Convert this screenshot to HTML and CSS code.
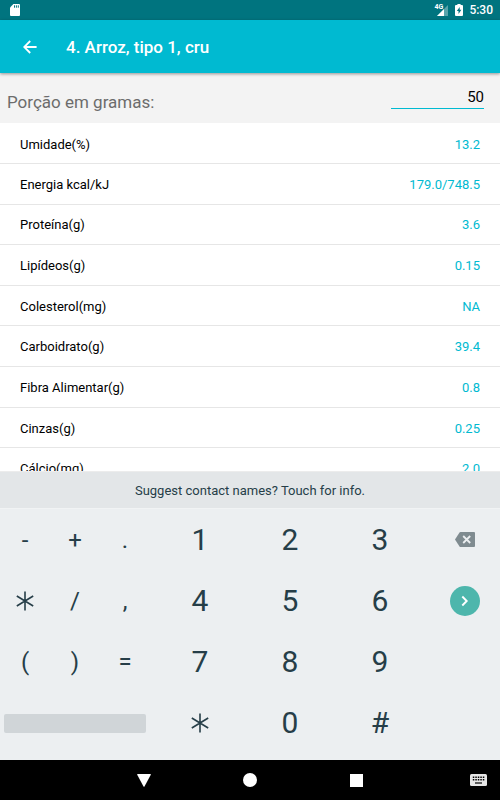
FILE: index.html
```html
<!DOCTYPE html>
<html lang="pt-BR">
<head>
<meta charset="utf-8">
<meta name="viewport" content="width=device-width, initial-scale=1">
<title>4. Arroz, tipo 1, cru</title>
<link rel="stylesheet" href="styles.css">
</head>
<body>
<div class="status">
  <svg class="sd" width="10" height="12" viewBox="0 0 10 12" aria-hidden="true"><path fill="#fff" d="M3.4 0H9q1 0 1 1v10q0 1-1 1H1q-1 0-1-1V3.4z"/><path stroke="#00747f" d="M4.5 1.3v2.4M6.4 1.3v2.4M8.3 1.3v2.4"/></svg>
  <span class="network">4G</span>
  <svg class="signal" width="11" height="11" viewBox="0 0 11 11" aria-hidden="true"><path fill="#fff" fill-opacity=".35" d="M11 0v11H0z"/><path fill="#fff" d="M7 4v7H0z"/></svg>
  <svg class="battery" width="8" height="12" viewBox="0 0 8 12" aria-hidden="true"><path fill="#fff" d="M2.4 0h3.2v1H7q1 0 1 1v9q0 1-1 1H1q-1 0-1-1V2q0-1 1-1h1.400z"/><path fill="#00747f" d="M4.700 3 1.800 7h1.700v3l2.900-4.200H4.700z"/></svg>
  <span class="clock">5:30</span>
</div>
<header class="appbar">
  <button class="back" type="button" aria-label="Voltar"><svg width="14" height="14" viewBox="0 0 14 14"><path fill="none" stroke="#fff" stroke-width="1.800" d="M13.600 7H1.500M7.200 1 1.200 7l6 6"/></svg></button>
  <h1>4. Arroz, tipo 1, cru</h1>
</header>
<main>
  <div class="portion">
    <label for="grams">Porção em gramas:</label>
    <input id="grams" type="text" inputmode="numeric" value="50">
  </div>
  <div class="list">
    <table>
      <tbody>
        <tr><th scope="row">Umidade(%)</th><td>13.2</td></tr>
        <tr><th scope="row">Energia kcal/kJ</th><td>179.0/748.5</td></tr>
        <tr><th scope="row">Proteína(g)</th><td>3.6</td></tr>
        <tr><th scope="row">Lipídeos(g)</th><td>0.15</td></tr>
        <tr><th scope="row">Colesterol(mg)</th><td>NA</td></tr>
        <tr><th scope="row">Carboidrato(g)</th><td>39.4</td></tr>
        <tr><th scope="row">Fibra Alimentar(g)</th><td>0.8</td></tr>
        <tr><th scope="row">Cinzas(g)</th><td>0.25</td></tr>
        <tr><th scope="row">Cálcio(mg)</th><td>2.0</td></tr>
      </tbody>
    </table>
  </div>
</main>
<section class="keyboard">
  <button class="suggest" type="button">Suggest contact names? Touch for info.</button>
  <div class="keys">
    <button class="sym" type="button">-</button>
    <button class="sym" type="button">+</button>
    <button class="sym" type="button">.</button>
    <button class="d1" type="button">1</button>
    <button type="button">2</button>
    <button type="button">3</button>
    <button class="end" type="button" aria-label="Delete"><svg width="20" height="16" viewBox="0 0 20 16"><path fill="#7f8b90" d="M5.500 0H19q1 0 1 1v13q0 1-1 1H5.500q-.6 0-1-.6L0 7.500 4.500.6q.4-.6 1-.6z"/><path stroke="#eceff1" stroke-width="1.800" d="m8.200 4 7 7m0-7-7 7"/></svg></button>

    <button class="sym" type="button" aria-label="*"><svg width="18" height="20" viewBox="0 0 18 20"><path class="star" d="M9 .5v19M.8 5l16.400 10M17.200 5 .8 15"/></svg></button>
    <button class="sym" type="button">/</button>
    <button class="sym" type="button">,</button>
    <button class="d1" type="button">4</button>
    <button type="button">5</button>
    <button type="button">6</button>
    <button class="end" type="button" aria-label="Next"><svg width="30" height="30" viewBox="0 0 30 30"><circle cx="15" cy="15" r="15" fill="#4db6ac"/><path fill="none" stroke="#fff" stroke-width="1.900" d="m12.300 10.500 4.400 4.500-4.400 4.500"/></svg></button>

    <button class="sym" type="button">(</button>
    <button class="sym" type="button">)</button>
    <button class="sym" type="button">=</button>
    <button class="d1" type="button">7</button>
    <button type="button">8</button>
    <button type="button">9</button>

    <button class="space" type="button" aria-label="Space"><span></span></button>
    <button class="d1" type="button" aria-label="*"><svg width="18" height="20" viewBox="0 0 18 20"><path class="star" d="M9 .5v19M.8 5l16.400 10M17.200 5 .8 15"/></svg></button>
    <button type="button">0</button>
    <button type="button">#</button>
  </div>
</section>
<nav class="navbar">
  <button class="nav-back" type="button" aria-label="Back"><svg width="14" height="13" viewBox="0 0 14 13"><path fill="#fff" d="M.7 0h12.600q.9 0 .5.800L7.600 12.200q-.6 1-1.200 0L.2.800Q-.2 0 .7 0z"/></svg></button>
  <button class="nav-home" type="button" aria-label="Home"><svg width="14" height="14" viewBox="0 0 14 14"><circle cx="7" cy="7" r="7" fill="#fff"/></svg></button>
  <button class="nav-recent" type="button" aria-label="Overview"><svg width="13" height="13" viewBox="0 0 13 13"><path fill="#fff" d="M0 0h13v13H0z"/></svg></button>
  <button class="nav-kb" type="button" aria-label="Keyboard"><svg width="17" height="12" viewBox="0 0 17 12"><rect width="17" height="12" rx="1.500" fill="#e6e6e6"/><path stroke="#000" stroke-width="1.500" stroke-dasharray="1.500 1" d="M2.800 3.200h11.500M2.800 5.700h11.500"/><path stroke="#000" stroke-width="1.200" d="M5 9h7"/></svg></button>
</nav>
</body>
</html>
```
FILE: styles.css
```css
* { box-sizing: border-box; }

body {
  margin: 0;
  height: 100vh;
  display: flex;
  flex-direction: column;
  overflow: hidden;
  background: #fff;
  color: #000;
  font-family: Roboto, "Liberation Sans", sans-serif;
}

button {
  border: 0;
  padding: 0;
  background: none;
  color: #263e48;
  font: inherit;
}

svg { display: block; }

.status {
  flex: none;
  display: flex;
  align-items: center;
  height: 20px;
  padding: 0 7px 0 10px;
  background: #00747f;
  color: #fff;
}

.network {
  align-self: flex-start;
  margin-left: auto;
  padding-top: 3px;
  font-size: 7px;
  line-height: 8px;
  font-weight: 700;
}

.signal { margin-left: -6px; }
.battery { margin: 0 6px 0 7px; }

.clock {
  font-size: 12px;
  line-height: 20px;
  font-weight: 500;
}

.appbar {
  flex: none;
  display: flex;
  align-items: center;
  gap: 29px;
  height: 53px;
  padding-left: 23px;
  background: #00bad1;
  box-shadow: 0 1px 3px rgba(0, 0, 0, .4);
  z-index: 1;
}

.appbar h1 {
  margin: 0;
  color: #fff;
  font-size: 17px;
  line-height: 20px;
  font-weight: 500;
}

main {
  flex: 1;
  min-height: 0;
  display: flex;
  flex-direction: column;
}

.portion {
  flex: none;
  display: flex;
  justify-content: space-between;
  align-items: flex-start;
  height: 50px;
  padding: 10px 16px 0 7px;
  background: #f3f3f3;
}

.portion label {
  padding-top: 9px;
  color: #6c6c6c;
  font-size: 17px;
  line-height: 20px;
}

.portion input {
  width: 93px;
  height: 26px;
  padding: 2px 0 0 4px;
  border: 0;
  border-bottom: 1px solid #00bad1;
  border-radius: 0;
  outline: 0;
  background: none;
  color: #000;
  font: 15px/20px Roboto, "Liberation Sans", sans-serif;
  text-align: right;
}

.list {
  flex: 1;
  min-height: 0;
  padding-top: 1px;
  overflow: hidden;
}

table {
  width: 100%;
  height: 365px;
  border-collapse: collapse;
  font-size: 13px;
  line-height: 16px;
}

th, td {
  padding: 2px 20px 0;
  border-bottom: 1px solid #e6e6e6;
}

th { font-weight: 400; text-align: left; }
td { color: #00bad1; text-align: right; }

.keyboard {
  flex: none;
  display: flex;
  flex-direction: column;
  background: #eceff1;
}

.suggest {
  height: 38px;
  padding-top: 2px;
  border-top: 1px solid #ececec;
  border-bottom: 1px solid #f1f3f4;
  background: #e3e6e8;
  font-size: 13px;
  line-height: 16px;
}

.keys {
  display: grid;
  grid-template-columns: 10fr 10fr 10fr 1fr 18fr 18fr 18fr 1fr 14fr;
  grid-template-rows: repeat(4, 1fr);
  height: 251px;
  padding-bottom: 6px;
}

.keys button {
  display: flex;
  align-items: center;
  justify-content: center;
  font-size: 30px;
  line-height: 36px;
}

.keys .sym { font-size: 24px; }
.keys .d1 { grid-column: 5; }
.keys .end { grid-column: 9; }
.keys .space { grid-column: 1 / 4; padding: 0 4px; }

.space span {
  flex: 1;
  height: 19px;
  border-radius: 2px;
  background: #d0d5d8;
}

.star {
  fill: none;
  stroke: #263e48;
  stroke-width: 1.6;
}

.navbar {
  flex: none;
  display: grid;
  grid-template-columns: 117fr 54fr 158fr 54fr 74fr 43fr;
  height: 40px;
  background: #000;
}

.navbar button {
  display: flex;
  align-items: center;
  justify-content: center;
}

.nav-back { grid-column: 2; }
.nav-home { grid-column: 3; }
.nav-recent { grid-column: 4; }
.nav-kb { grid-column: 6; }
```
